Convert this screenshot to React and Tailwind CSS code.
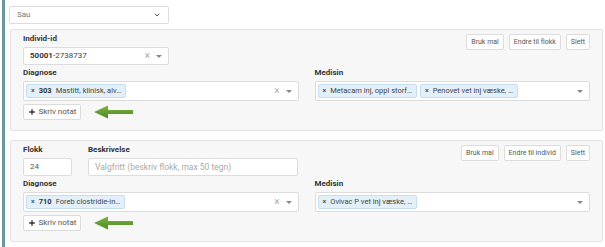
import { ChevronDown, Plus } from "lucide-react";

const Label = ({ children, className = "" }) => (
  <div className={`h-[10px] text-[8px] leading-[10px] font-bold text-[#333] ${className}`}>{children}</div>
);

const Btn = ({ children }) => (
  <button className="h-[16px] px-[4px] bg-white border border-[#dcdcdc] rounded-[2px] text-[7px] leading-none text-[#555]">
    {children}
  </button>
);

const Caret = () => <span className="w-0 h-0 border-l-[3px] border-r-[3px] border-t-[3px] border-l-transparent border-r-transparent border-t-[#888]" />;

const Chip = ({ code, text }) => (
  <span className="h-[14px] flex items-center gap-[4px] px-[4px] bg-[#e3f0fa] border border-[#c6dcef] rounded-[2px] text-[7.5px] text-[#444] whitespace-nowrap">
    <span className="font-bold text-[7px] text-[#555]">×</span>
    {code && <span className="font-bold text-[#333]">{code}</span>}
    <span>{text}</span>
  </span>
);

const Multi = ({ chips, clear }) => (
  <div className="h-[20px] bg-white border border-[#dcdcdc] rounded-[2px] flex items-center pl-[2px] pr-[6px] gap-[3px]">
    {chips.map((c) => (
      <Chip key={c.text} code={c.code} text={c.text} />
    ))}
    <div className="ml-auto flex items-center gap-[6px]">
      {clear && <span className="text-[10px] leading-none text-[#aaa]">×</span>}
      <Caret />
    </div>
  </div>
);

const Arrow = () => (
  <svg width="40" height="14" viewBox="0 0 40 14" className="ml-[13px]">
    <defs>
      <linearGradient id="g" x1="0" y1="0" x2="0" y2="1">
        <stop offset="0" stopColor="#7cb342" />
        <stop offset="1" stopColor="#4e8a22" />
      </linearGradient>
    </defs>
    <path d="M0 7 L14 0.5 L14 5 L39 5 L39 9 L14 9 L14 13.5 Z" fill="url(#g)" />
  </svg>
);

const NoteRow = () => (
  <div className="mt-[3px] flex items-center">
    <button className="h-[16px] w-[58px] bg-white border border-[#dcdcdc] rounded-[2px] flex items-center justify-center gap-[3px] text-[8px] text-[#555]">
      <Plus size={8} strokeWidth={4} className="text-[#333]" />
      Skriv notat
    </button>
    <Arrow />
  </div>
);

const Card = ({ top, buttons, diag, med }) => (
  <div className="ml-[1px] bg-[#f7f7f7] border border-[#e3e3e3] rounded-[2px] pt-[4px] pb-[10px] px-[12px]">
    <div className="flex items-start justify-between">
      {top}
      <div className="flex gap-[5px]">
        {buttons.map((b) => (
          <Btn key={b}>{b}</Btn>
        ))}
      </div>
    </div>
    <div className="grid grid-cols-2 gap-x-[16px]">
      <div>
        <Label className="mt-[3px] mb-[3px]">Diagnose</Label>
        <Multi chips={diag} clear />
      </div>
      <div>
        <Label className="mt-[3px] mb-[3px]">Medisin</Label>
        <Multi chips={med} />
      </div>
    </div>
    <NoteRow />
  </div>
);

export default function App() {
  return (
    <div className="w-[605px] h-[247px] bg-white flex font-['Roboto',sans-serif] overflow-hidden">
      <div className="ml-[2px] w-[3px] bg-[#6a9799]" />
      <div className="flex-1 pl-[4px] pr-[2px]">
        <div className="mt-[6px] w-[160px] h-[18px] bg-white border border-[#dcdcdc] rounded-[2px] flex items-center justify-between px-[7px] text-[8px] text-[#777]">
          Sau
          <ChevronDown size={8} strokeWidth={3} className="text-[#555]" />
        </div>
        <div className="mt-[5px] flex flex-col gap-[9px]">
          <Card
            top={
              <div>
                <Label className="mb-[3px]">Individ-id</Label>
                <div className="w-[146px] h-[18px] bg-white border border-[#dcdcdc] rounded-[2px] flex items-center px-[6px] text-[8px] text-[#444]">
                  <span className="font-bold text-[#333]">50001</span>-2738737
                  <div className="ml-auto flex items-center gap-[6px]">
                    <span className="text-[10px] leading-none text-[#aaa]">×</span>
                    <Caret />
                  </div>
                </div>
              </div>
            }
            buttons={["Bruk mal", "Endre til flokk", "Slett"]}
            diag={[{ code: "303", text: "Mastitt, klinisk, alv…" }]}
            med={[{ text: "Metacam inj, oppl storf…" }, { text: "Penovet vet inj væske, …" }]}
          />
          <Card
            top={
              <div className="flex gap-[16px]">
                <div>
                  <Label className="mb-[3px]">Flokk</Label>
                  <div className="w-[49px] h-[18px] bg-white border border-[#dcdcdc] rounded-[2px] flex items-center px-[6px] text-[8px] text-[#555]">
                    24
                  </div>
                </div>
                <div>
                  <Label className="mb-[3px]">Beskrivelse</Label>
                  <div className="w-[210px] h-[18px] bg-white border border-[#dcdcdc] rounded-[2px] flex items-center px-[6px] text-[8.5px] text-[#aaa]">
                    Valgfritt (beskriv flokk, max 50 tegn)
                  </div>
                </div>
              </div>
            }
            buttons={["Bruk mal", "Endre til individ", "Slett"]}
            diag={[{ code: "710", text: "Foreb clostridie-in…" }]}
            med={[{ text: "Ovivac P vet inj væske, …" }]}
          />
        </div>
      </div>
    </div>
  );
}
